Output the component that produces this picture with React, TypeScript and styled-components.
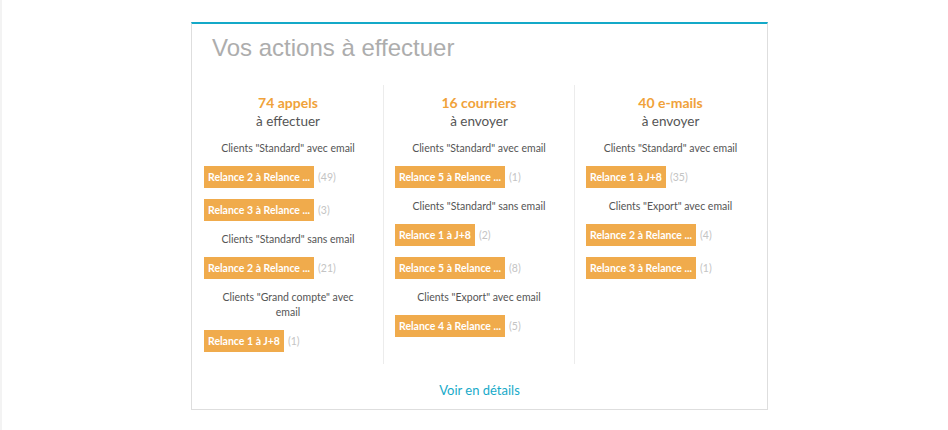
import styled, { createGlobalStyle } from "styled-components";

type Action = { label: string; count: number };
type Group = { title: string; actions: Action[] };
type Column = { headline: string; sub: string; groups: Group[] };

const columns: Column[] = [
  {
    headline: "74 appels",
    sub: "à effectuer",
    groups: [
      {
        title: 'Clients "Standard" avec email',
        actions: [
          { label: "Relance 2 à Relance ...", count: 49 },
          { label: "Relance 3 à Relance ...", count: 3 },
        ],
      },
      {
        title: 'Clients "Standard" sans email',
        actions: [{ label: "Relance 2 à Relance ...", count: 21 }],
      },
      {
        title: 'Clients "Grand compte" avec email',
        actions: [{ label: "Relance 1 à J+8", count: 1 }],
      },
    ],
  },
  {
    headline: "16 courriers",
    sub: "à envoyer",
    groups: [
      {
        title: 'Clients "Standard" avec email',
        actions: [{ label: "Relance 5 à Relance ...", count: 1 }],
      },
      {
        title: 'Clients "Standard" sans email',
        actions: [
          { label: "Relance 1 à J+8", count: 2 },
          { label: "Relance 5 à Relance ...", count: 8 },
        ],
      },
      {
        title: 'Clients "Export" avec email',
        actions: [{ label: "Relance 4 à Relance ...", count: 5 }],
      },
    ],
  },
  {
    headline: "40 e-mails",
    sub: "à envoyer",
    groups: [
      {
        title: 'Clients "Standard" avec email',
        actions: [{ label: "Relance 1 à J+8", count: 35 }],
      },
      {
        title: 'Clients "Export" avec email',
        actions: [
          { label: "Relance 2 à Relance ...", count: 4 },
          { label: "Relance 3 à Relance ...", count: 1 },
        ],
      },
    ],
  },
];

export default function App() {
  return (
    <>
      <GlobalStyle />
      <Page>
        <Card>
          <Title>Vos actions à effectuer</Title>
          <Columns>
            {columns.map((col, i) => (
              <Col key={i} $last={i === columns.length - 1}>
                <Headline>{col.headline}</Headline>
                <Sub>{col.sub}</Sub>
                {col.groups.map((g, j) => (
                  <div key={j}>
                    <GroupTitle>{g.title}</GroupTitle>
                    {g.actions.map((a, k) => (
                      <ActionRow key={k}>
                        <ActionButton>{a.label}</ActionButton>
                        <Count>({a.count})</Count>
                      </ActionRow>
                    ))}
                  </div>
                ))}
              </Col>
            ))}
          </Columns>
          <Footer>
            <MoreLink href="#">Voir en détails</MoreLink>
          </Footer>
        </Card>
      </Page>
    </>
  );
}

const GlobalStyle = createGlobalStyle`
  html, body {
    margin: 0;
    padding: 0;
    background: #ffffff;
  }
  body {
    font-family: Lato, "Open Sans", sans-serif;
  }
`;

const Page = styled.div`
  width: 948px;
  height: 430px;
  box-sizing: border-box;
  padding: 22px 0 0 191px;
  box-shadow: inset 2px 0 0 #f3f3f3;
`;

const Card = styled.div`
  width: 577px;
  box-sizing: border-box;
  border: 1px solid #dedede;
  border-top: 2px solid #14a9c8;
  background: #fff;
  padding-bottom: 10px;
`;

const Title = styled.h1`
  margin: 0;
  padding: 10px 0 0 20px;
  font-family: "Liberation Sans", Arial, sans-serif;
  font-weight: normal;
  font-size: 24px;
  line-height: 28px;
  color: #adadad;
`;

const Columns = styled.div`
  display: grid;
  grid-template-columns: repeat(3, 1fr);
  margin-top: 23px;
  padding: 0 1px;
`;

const Col = styled.div<{ $last: boolean }>`
  box-sizing: border-box;
  min-height: 279px;
  padding: 8px 11px 0;
  border-right: ${({ $last }) => ($last ? "none" : "1px solid #ececec")};
  text-align: center;
`;

const Headline = styled.div`
  font-size: 14px;
  font-weight: bold;
  line-height: 19px;
  color: #f0a23a;
`;

const Sub = styled.div`
  font-size: 13.5px;
  line-height: 19px;
  color: #555;
  margin-bottom: 10px;
`;

const GroupTitle = styled.div`
  font-size: 10.5px;
  line-height: 15px;
  color: #555;
  padding: 0 10px;
  margin-bottom: 10px;
`;

const ActionRow = styled.div`
  display: flex;
  align-items: center;
  margin-bottom: 11px;
`;

const ActionButton = styled.span`
  display: inline-block;
  height: 22px;
  line-height: 22px;
  padding: 0 4px;
  background: #f0ab4c;
  color: #fff;
  font-size: 10.5px;
  font-weight: bold;
  white-space: nowrap;
`;

const Count = styled.span`
  margin-left: 4px;
  font-size: 10.5px;
  color: #c4c4c4;
`;

const Footer = styled.div`
  text-align: center;
  padding-top: 16px;
  line-height: 18px;
`;

const MoreLink = styled.a`
  font-size: 13px;
  line-height: 18px;
  color: #17aac9;
  text-decoration: none;
`;
